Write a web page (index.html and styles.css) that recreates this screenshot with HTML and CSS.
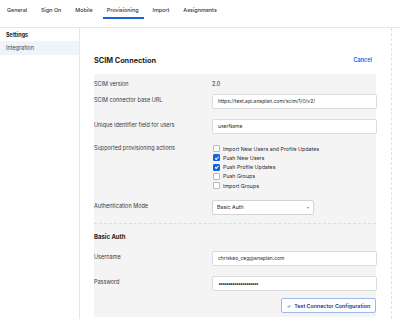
FILE: index.html
```html
<!DOCTYPE html>
<html lang="en">
<head>
  <meta charset="UTF-8">
  <title>Provisioning - Integration</title>
  <link rel="stylesheet" href="styles.css">
</head>
<body>
  <div id="tabs">
    <span class="tab">General</span>
    <span class="tab">Sign On</span>
    <span class="tab">Mobile</span>
    <span class="tab active">Provisioning</span>
    <span class="tab">Import</span>
    <span class="tab">Assignments</span>
  </div>

  <div id="page">
    <div id="sidebar">
      <p class="side-title">Settings</p>
      <p class="side-item selected">Integration</p>
    </div>

    <div id="main">
      <div class="panel-head">
        <h2>SCIM Connection</h2>
        <a class="cancel">Cancel</a>
      </div>

      <div class="form">
        <div class="row first">
          <span class="label">SCIM version</span>
          <span class="value">2.0</span>
        </div>
        <div class="row r-url">
          <span class="label">SCIM connector base URL</span>
          <div class="input">https://test.api.anaplan.com/scim/1/0/v2/</div>
        </div>
        <div class="row r-uid">
          <span class="label">Unique identifier field for users</span>
          <div class="input">userName</div>
        </div>
        <div class="row r-actions">
          <span class="label">Supported provisioning actions</span>
          <ul class="checks">
            <li><span class="box"></span>Import New Users and Profile Updates</li>
            <li><span class="box on"></span>Push New Users</li>
            <li><span class="box on"></span>Push Profile Updates</li>
            <li><span class="box"></span>Push Groups</li>
            <li><span class="box"></span>Import Groups</li>
          </ul>
        </div>
        <div class="row r-auth">
          <span class="label">Authentication Mode</span>
          <div class="select">Basic Auth<span class="caret">&#9662;</span></div>
        </div>

        <div class="divider"></div>

        <h3>Basic Auth</h3>
        <div class="row r-user">
          <span class="label">Username</span>
          <div class="input">chriskeo_ceg@anaplan.com</div>
        </div>
        <div class="row r-pass">
          <span class="label">Password</span>
          <div class="input dots">&bull;&bull;&bull;&bull;&bull;&bull;&bull;&bull;&bull;&bull;&bull;&bull;&bull;&bull;&bull;&bull;&bull;&bull;&bull;&bull;</div>
        </div>
        <div class="actions">
          <button class="test-btn"><span class="tick">&#10003;</span>Test Connector Configuration</button>
        </div>
      </div>
    </div>
  </div>
</body>
</html>
```

FILE: styles.css
```css
body {
  margin: 0;
  font-family: Inter, "Liberation Sans", sans-serif;
  color: #1d1d21;
  background: #fff;
  width: 400px;
  height: 319px;
  overflow: hidden;
}

p, h2, h3, ul {
  margin: 0;
  padding: 0;
}

#tabs {
  display: flex;
  gap: 5px;
  padding: 0 0 0 3px;
  height: 28px;
  border-bottom: 1px solid #e6e6ea;
  box-sizing: border-box;
}

.tab {
  font-size: 5.4px;
  font-weight: 500;
  color: #33333a;
  padding: 0 5px 0 4px;
  height: 19px;
  line-height: 20px;
  box-sizing: border-box;
}

.tab.active {
  border-bottom: 2px solid #1662dd;
}

#page {
  display: flex;
  height: 291px;
}

#sidebar {
  width: 79px;
  border-right: 1px solid #e6e6ea;
  padding-top: 2px;
}

.side-title {
  font-size: 5.5px;
  font-weight: 700;
  padding: 0 6px;
  line-height: 11px;
}

.side-item {
  font-size: 5.5px;
  color: #444;
  padding: 0 6px;
  line-height: 14px;
}

.side-item.selected {
  background: #eef3fc;
}

#main {
  width: 312px;
  border-right: 1px dashed #e2e2e6;
  padding: 26px 15px 0 14px;
  box-sizing: border-box;
}

.panel-head {
  display: flex;
  justify-content: space-between;
  align-items: center;
  height: 12px;
  padding-right: 4px;
}

.panel-head h2 {
  font-size: 7.3px;
  font-weight: 700;
}

.cancel {
  font-size: 5.5px;
  font-weight: 600;
  color: #1662dd;
}

.form {
  margin-top: 8px;
  background: #f4f4f5;
  padding-top: 4px;
  height: 243px;
  box-sizing: border-box;
}

.row {
  display: grid;
  grid-template-columns: 118px 165px;
  font-size: 5.5px;
}

.label {
  color: #3a3a40;
  line-height: 12px;
}

.value {
  line-height: 12px;
}

.r-url { margin-top: 4px; }
.r-uid { margin-top: 10px; }
.r-actions { margin-top: 10px; }
.r-auth { margin-top: 10px; }
.r-user { margin-top: 8px; }
.r-pass { margin-top: 10px; }

.r-actions .label {
  line-height: 9.25px;
}

.input {
  background: #fff;
  border: 1px solid #dcdce0;
  border-radius: 2px;
  height: 15px;
  box-sizing: border-box;
  line-height: 13px;
  padding: 0 5px;
  color: #2a2a30;
  font-size: 5px;
}

.dots {
  font-size: 6px;
  letter-spacing: -1.4px;
}

.checks {
  list-style: none;
}

.checks li {
  display: flex;
  align-items: center;
  gap: 3px;
  height: 9.25px;
  padding-left: 1px;
  color: #2a2a30;
  font-size: 5.3px;
}

.box {
  width: 5px;
  height: 5px;
  border: 0.7px solid #b8b8be;
  border-radius: 1px;
  background: #fff;
  position: relative;
}

.box.on {
  background: #1662dd;
  border-color: #1662dd;
}

.box.on::after {
  content: "";
  position: absolute;
  left: 1.6px;
  top: 0.4px;
  width: 1.4px;
  height: 2.6px;
  border: solid #fff;
  border-width: 0 0.8px 0.8px 0;
  transform: rotate(45deg);
}

.select {
  width: 102px;
  height: 15px;
  box-sizing: border-box;
  background: #fff;
  border: 1px solid #d4d4d8;
  border-radius: 2px;
  line-height: 13px;
  padding: 0 4px;
  display: flex;
  justify-content: space-between;
  color: #2a2a30;
  font-size: 5.3px;
}

.caret {
  font-size: 4px;
  color: #888;
}

.divider {
  margin-top: 8px;
  border-top: 1px dashed #dedee2;
}

.form h3 {
  font-size: 6px;
  font-weight: 700;
  line-height: 12px;
  margin-top: 7px;
}

.actions {
  display: flex;
  justify-content: flex-end;
  margin-top: 7px;
}

.test-btn {
  font-family: Inter, "Liberation Sans", sans-serif;
  font-size: 5.3px;
  font-weight: 600;
  color: #1a3a7a;
  background: #fff;
  border: 1px solid #9dbaf0;
  border-radius: 2px;
  height: 15px;
  width: 95px;
  padding: 0;
  display: flex;
  align-items: center;
  justify-content: center;
  gap: 3px;
}

.tick {
  font-size: 5px;
  color: #6b7fa8;
}
```
